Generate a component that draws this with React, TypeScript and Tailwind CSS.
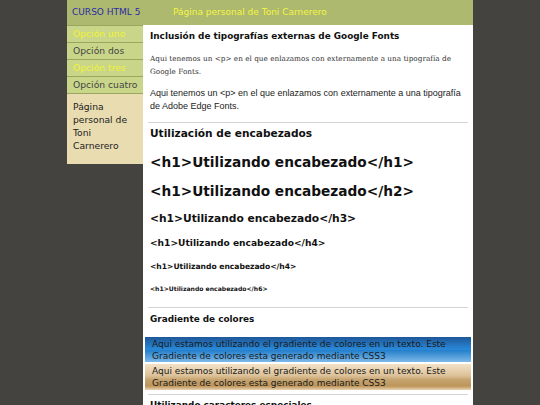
const verdana = { fontFamily: '"DejaVu Sans", Verdana, sans-serif' };

const nav = [
  { label: "Opción uno", active: true },
  { label: "Opción dos", active: false },
  { label: "Opción tres", active: true },
  { label: "Opción cuatro", active: false },
];

const headings = [
  { text: "<h1>Utilizando encabezado</h1>", cls: "mt-[13px] text-[13.7px] leading-[18px]" },
  { text: "<h1>Utilizando encabezado</h2>", cls: "mt-[11px] text-[13.7px] leading-[18px]" },
  { text: "<h1>Utilizando encabezado</h3>", cls: "mt-[12px] text-[10.7px] leading-[14px]" },
  { text: "<h1>Utilizando encabezado</h4>", cls: "mt-[11px] text-[9.1px] leading-[12px]" },
  { text: "<h1>Utilizando encabezado</h4>", cls: "mt-[13px] text-[7.6px] leading-[10px]" },
  { text: "<h1>Utilizando encabezado</h6>", cls: "mt-[13px] text-[6.1px] leading-[8px]" },
];

function Divider({ className = "" }: { className?: string }) {
  return <div className={`mx-[5px] border-t border-[#d4d4d4] ${className}`} />;
}

export default function App() {
  return (
    <div className="h-[405px] bg-[#45433f] overflow-hidden" style={verdana}>
      <div className="mx-auto w-[406px]">
        <header className="h-[25px] bg-[#adb96f] flex items-center text-[9px]">
          <span className="pl-[5px] w-[106px] text-[#2b2ba6]">CURSO HTML 5</span>
          <span className="text-[#f5f542]">Página personal de Toni Carnerero</span>
        </header>

        <div className="flex">
          <aside className="w-[76px] shrink-0 self-start">
            <ul className="border-t border-[#9aa55e]">
              {nav.map(({ label, active }) => (
                <li
                  key={label}
                  className={`h-[17px] pl-[6px] flex items-center border-b border-[#9aa55e] bg-[#c9d68a] text-[9.2px] ${active ? "text-[#f2f235]" : "text-[#444]"}`}
                >
                  {label}
                </li>
              ))}
            </ul>
            <div className="bg-[#e8dcb0] h-[70px] pl-[6px] pt-[6px] text-[9.2px] leading-[13px] text-[#222]">
              Página
              <br />
              personal de
              <br />
              Toni
              <br />
              Carnerero
            </div>
          </aside>

          <main className="flex-1 bg-white pt-[4px] pb-[20px] text-[#111]">
            <h2 className="px-[7px] text-[8.9px] leading-[14px] font-bold whitespace-nowrap">
              Inclusión de tipografías externas de Google Fonts
            </h2>
            <p
              className="mt-[9px] px-[7px] pr-[14px] text-[7.3px] leading-[13px] text-[#333]"
              style={{ fontFamily: '"DejaVu Serif", Georgia, serif' }}
            >
              Aqui tenemos un &lt;p&gt; en el que enlazamos con externamente a una tipografía de Google Fonts.
            </p>
            <p
              className="mt-[9px] pl-[7px] pr-[4px] text-[9px] leading-[13px] text-[#222]"
              style={{ fontFamily: '"Liberation Sans", Arial, sans-serif' }}
            >
              Aqui tenemos un &lt;p&gt; en el que enlazamos con externamente a una tipografía de Adobe Edge Fonts.
            </p>

            <Divider className="mt-[9px]" />
            <h2 className="mt-[3px] px-[7px] text-[10.6px] leading-[14px] font-bold">Utilización de encabezados</h2>
            {headings.map(({ text, cls }, i) => (
              <div key={i} className={`px-[7px] font-bold whitespace-nowrap ${cls}`}>
                {text}
              </div>
            ))}

            <Divider className="mt-[14px]" />
            <h2 className="mt-[4px] px-[7px] text-[8.9px] leading-[14px] font-bold">Gradiente de colores</h2>
            <div className="mt-[11px] mx-[2px] h-[25px] pl-[7px] pt-[1px] text-[9px] leading-[12px] text-[#1a1a1a] bg-[linear-gradient(to_bottom,#1e5799_0%,#2989d8_50%,#207cca_51%,#7db9e8_100%)]">
              Aqui estamos utilizando el gradiente de colores en un texto. Este Gradiente de colores esta generado mediante CSS3
            </div>
            <div className="mt-[2px] mx-[2px] h-[26px] pl-[7px] pt-[1px] text-[9px] leading-[12px] text-[#1a1a1a] bg-[linear-gradient(to_bottom,#f3e2c7_0%,#dcc198_45%,#c6a470_60%,#bd955a_85%,#e9d4b3_100%)]">
              Aqui estamos utilizando el gradiente de colores en un texto. Este Gradiente de colores esta generado mediante CSS3
            </div>

            <Divider className="mt-[4px]" />
            <h2 className="mt-[3px] px-[7px] text-[8.9px] leading-[14px] font-bold">Utilizando caracteres especiales</h2>
          </main>
        </div>
      </div>
    </div>
  );
}
